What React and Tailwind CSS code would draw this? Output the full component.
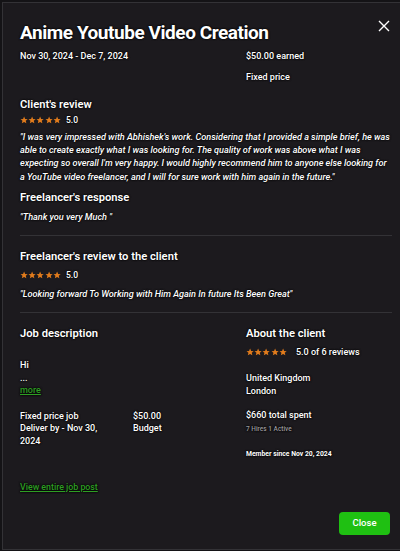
import React from "react";

const Stars = () => (
  <div className="flex items-center">
    {[0, 1, 2, 3, 4].map((i) => (
      <svg key={i} width="8.2" height="8.2" viewBox="0 0 24 24" className="fill-[#e07b1c]">
        <path d="M12 1.5l3 7.1 7.5.6-5.7 4.9 1.8 7.5L12 17.6 5.4 21.6l1.8-7.5L1.5 9.2l7.5-.6z" />
      </svg>
    ))}
  </div>
);

const shadow = "[text-shadow:0_0_2px_#000,0_0_2px_#000]";

const App = () => {
  return (
    <div className="h-[551px] w-[400px] overflow-hidden bg-[#141316] pl-[2px] pt-[2px] font-['Roboto','Liberation_Sans',Arial,sans-serif] text-white">
      <div className={`relative flex h-[548px] w-[420px] flex-col border border-[#333236] bg-[#1c1a1e] pb-[14px] pl-[17px] pr-[28px] pt-[18px] ${shadow}`}>
        <button className="absolute left-[374px] top-[16px] text-white">
          <svg width="14" height="14" viewBox="0 0 14 14" stroke="currentColor" strokeWidth="1.4">
            <path d="M2 2l10 10M12 2L2 12" />
          </svg>
        </button>

        <h1 className="text-[19px] font-bold leading-[24px] tracking-[-0.45px]">Anime Youtube Video Creation</h1>

        <div className="mt-[5px] flex text-[9px] font-medium">
          <div className="w-[226px]">Nov 30, 2024 - Dec 7, 2024</div>
          <div className="flex flex-col gap-[7px]">
            <div>$50.00 earned</div>
            <div>Fixed price</div>
          </div>
        </div>

        <div className="mt-[13px] w-[372px]">
          <h2 className="text-[11.2px] font-semibold leading-[16px]">Client's review</h2>
          <div className="mt-[1px] flex items-center gap-[5px] text-[8.5px] font-medium">
            <Stars />
            <span>5.0</span>
          </div>
          <p className="mt-[4px] text-[9.1px] font-medium italic leading-[13.3px]">
            "I was very impressed with Abhishek's work. Considering that I provided a simple brief, he was able to create exactly what I was looking for. The quality of work was above what I was expecting so overall I'm very happy. I would highly recommend him to anyone else looking for a YouTube video freelancer, and I will for sure work with him again in the future."
          </p>
          <h2 className="mt-[6px] text-[11.2px] font-semibold leading-[16px]">Freelancer's response</h2>
          <p className="mt-[5px] text-[9.1px] font-medium italic leading-[13px]">"Thank you very Much "</p>

          <div className="mt-[11px] h-px bg-[#333236]" />

          <h2 className="mt-[13px] text-[11.2px] font-semibold leading-[16px]">Freelancer's review to the client</h2>
          <div className="mt-[4px] flex items-center gap-[5px] text-[8.5px] font-medium">
            <Stars />
            <span>5.0</span>
          </div>
          <p className="mt-[6px] text-[9.1px] font-medium italic leading-[13px]">
            "Looking forward To Working with Him Again In future Its Been Great"
          </p>

          <div className="mt-[11px] h-px bg-[#333236]" />
        </div>

        <div className="mt-[13px] flex">
          <div className="w-[226px]">
            <h2 className="text-[11.2px] font-semibold leading-[16px]">Job description</h2>
            <div className="mt-[16px] text-[9px] font-medium">
              <div className="leading-[14px]">Hi</div>
              <div className="leading-[12px]">...</div>
              <a href="#" className="block leading-[13px] text-[#2e9e23] underline">more</a>
            </div>
            <div className="mt-[13px] flex text-[9px] font-medium leading-[12.5px]">
              <div className="w-[113px]">
                <div>Fixed price job</div>
                <div>Deliver by - Nov 30,</div>
                <div>2024</div>
              </div>
              <div>
                <div>$50.00</div>
                <div>Budget</div>
              </div>
            </div>
          </div>
          <div>
            <h2 className="text-[11.2px] font-semibold leading-[16px]">About the client</h2>
            <div className="mt-[4px] flex items-center gap-[9px] text-[9px] font-medium">
              <Stars />
              <span>5.0 of 6 reviews</span>
            </div>
            <div className="mt-[13px] text-[9px] font-medium leading-[12.5px]">
              <div>United Kingdom</div>
              <div>London</div>
            </div>
            <div className="mt-[12px] text-[9px] font-medium leading-[12.5px]">$660 total spent</div>
            <div className="mt-[3px] text-[6.5px] font-medium text-[#9a999c]">7 Hires 1 Active</div>
            <div className="mt-[15px] text-[6.8px] font-bold">Member since Nov 20, 2024</div>
          </div>
        </div>

        <a href="#" className="mt-[21px] w-fit text-[8.8px] font-medium text-[#2e9e23] underline">
          View entire job post
        </a>

        <div className="mt-auto flex w-[370px] justify-end">
          <button className="h-[23px] w-[51px] rounded-[4px] bg-[#1fc012] text-[9.5px] font-medium text-white">
            Close
          </button>
        </div>
      </div>
    </div>
  );
};

export default App;
